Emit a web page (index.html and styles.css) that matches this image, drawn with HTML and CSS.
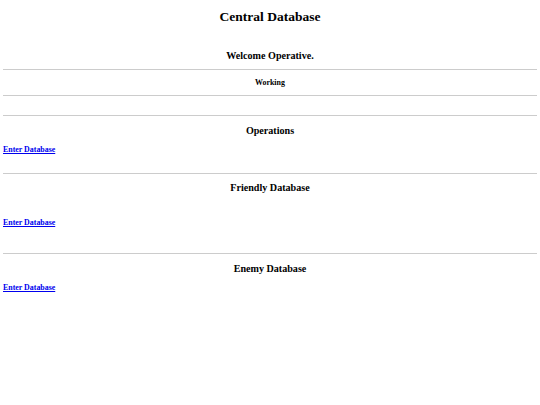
FILE: index.html
```html
<!DOCTYPE html>
<html lang="en">
<head>
<meta charset="utf-8">
<title>Central Database</title>
<link rel="stylesheet" href="styles.css">
</head>
<body>
<h1 class="title">Central Database</h1>
<h2 class="heading heading-welcome">Welcome Operative.</h2>
<hr class="rule rule-a">
<p class="status">Working</p>
<hr class="rule rule-b">
<hr class="rule rule-c">
<section class="block">
  <h2 class="heading heading-ops">Operations</h2>
  <a class="enter enter-ops" href="#">Enter Database</a>
</section>
<hr class="rule rule-d">
<section class="block">
  <h2 class="heading heading-friendly">Friendly Database</h2>
  <a class="enter enter-friendly" href="#">Enter Database</a>
</section>
<hr class="rule rule-e">
<section class="block">
  <h2 class="heading heading-enemy">Enemy Database</h2>
  <a class="enter enter-enemy" href="#">Enter Database</a>
</section>
</body>
</html>
```
FILE: styles.css
```css
html, body {
  margin: 0;
  padding: 0;
  background: #ffffff;
}
body {
  font-family: "Liberation Serif", "Times New Roman", serif;
  color: #000000;
  font-weight: bold;
  display: flex;
  flex-direction: column;
}
.title {
  margin: 8.5px 0 0;
  font-size: 13.5px;
  line-height: 16px;
  text-align: center;
  font-weight: bold;
}
.heading {
  margin: 0;
  font-size: 10.1px;
  line-height: 12px;
  text-align: center;
  font-weight: bold;
}
.heading-welcome { margin-top: 25.5px; }
.heading-ops { margin-top: 9px; }
.heading-friendly { margin-top: 8px; }
.heading-enemy { margin-top: 9px; }
.rule {
  margin: 0 3px;
  height: 0;
  border: 0;
  border-top: 1px solid #cccccc;
}
.rule-a { margin-top: 7px; }
.rule-b { margin-top: 7px; }
.rule-c { margin-top: 19px; }
.rule-d { margin-top: 18px; }
.rule-e { margin-top: 25px; }
.status {
  margin: 8px 0 0;
  font-size: 7.9px;
  line-height: 10px;
  text-align: center;
}
.block {
  display: flex;
  flex-direction: column;
  align-items: flex-start;
}
.block .heading { align-self: stretch; }
.enter {
  display: block;
  margin: 8px 0 0 3px;
  font-size: 7.9px;
  line-height: 10px;
  color: #0000ee;
  text-decoration: underline;
  font-weight: bold;
}
.enter-friendly { margin-top: 24px; }
```
